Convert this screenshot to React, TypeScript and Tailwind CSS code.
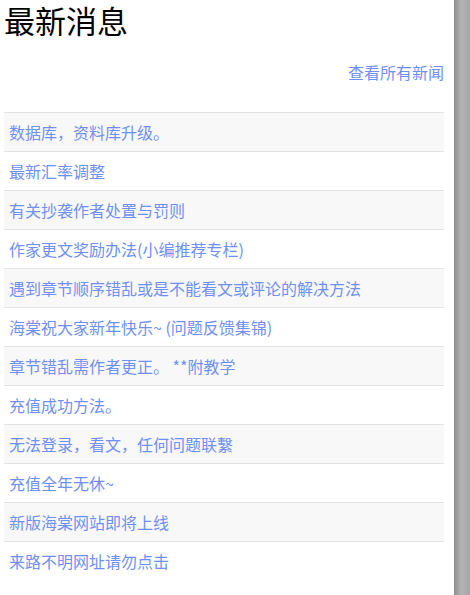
import React from "react";

const news: string[] = [
  "数据库，资料库升级。",
  "最新汇率调整",
  "有关抄袭作者处置与罚则",
  "作家更文奖励办法(小编推荐专栏)",
  "遇到章节顺序错乱或是不能看文或评论的解决方法",
  "海棠祝大家新年快乐~ (问题反馈集锦)",
  "章节错乱需作者更正。 **附教学",
  "充值成功方法。",
  "无法登录，看文，任何问题联繫",
  "充值全年无休~",
  "新版海棠网站即将上线",
  "来路不明网址请勿点击",
];

export default function App(): React.ReactElement {
  return (
    <div
      className="flex h-[595px] w-[470px] overflow-hidden bg-white"
      style={{ fontFamily: '"Noto Sans CJK SC", "Noto Sans", sans-serif' }}
    >
      <div className="w-[454px] shrink-0 pl-[4px] pr-[10px]">
        <h1 className="text-[31px] leading-[40px] font-normal text-black">最新消息</h1>
        <div className="mt-[20px] flex justify-end">
          <a className="text-[16px] leading-[24px] text-[#7090f6] cursor-pointer">查看所有新闻</a>
        </div>
        <ul className="mt-[28px]">
          {news.map((title, i) => (
            <li
              key={title}
              className={`border-t border-[#e3e3e3] px-[5px] py-[8px] text-[16px] leading-[22px] text-[#7090f6] ${
                i % 2 === 0 ? "bg-[#f8f8f8]" : "bg-white"
              }`}
            >
              <a className="cursor-pointer">{title}</a>
            </li>
          ))}
        </ul>
      </div>
      <div className="h-full w-[16px] shrink-0 bg-[linear-gradient(to_right,#8e8e8e,#b4b4b4_45%,#a6a6a6)]" />
    </div>
  );
}
